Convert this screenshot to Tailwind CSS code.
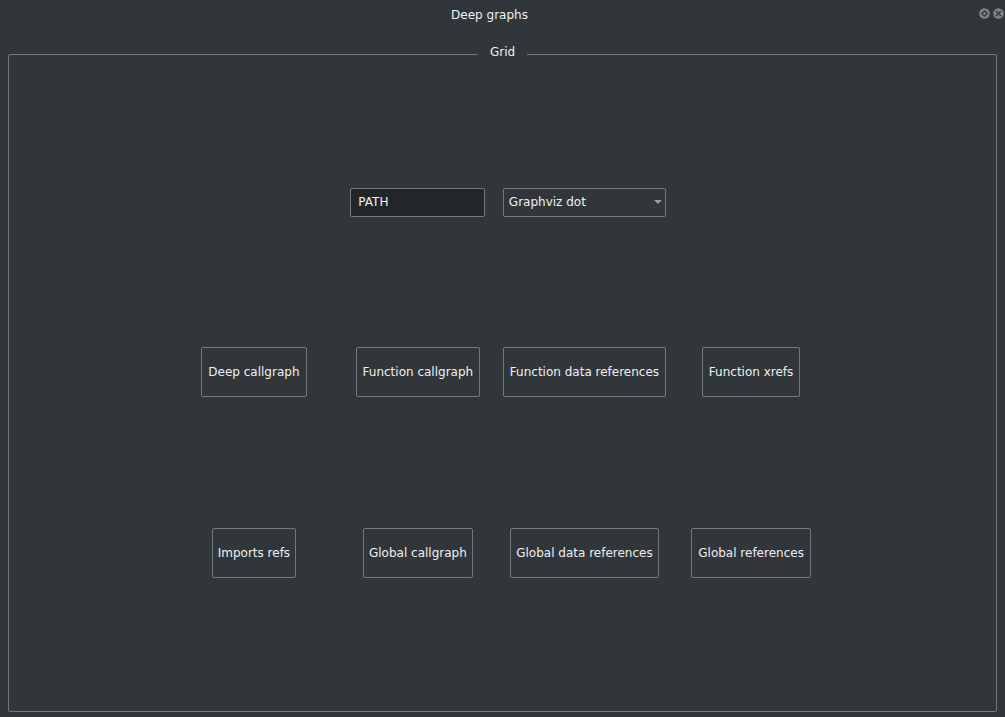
<!DOCTYPE html>
<html lang="en">
<head>
<meta charset="utf-8">
<meta name="viewport" content="width=device-width, initial-scale=1">
<title>Deep graphs</title>
<script src="https://cdn.jsdelivr.net/npm/@tailwindcss/browser@4"></script>
</head>
<body class="flex h-screen flex-col bg-[#31363b] font-['DejaVu_Sans',sans-serif] text-[12px] leading-4 text-[#eff0f1]">
  <header class="flex h-7 items-start pr-px">
    <h1 class="flex-1 pt-[7px] text-center">Deep graphs</h1>
    <div class="flex gap-[3px] pt-2">
      <button type="button" aria-label="Float" class="block">
        <svg class="block size-[11px]" viewBox="0 0 11 11" fill="none"><circle cx="5.5" cy="5.5" r="5.3" fill="#7f8386"/><path d="M5.5 2.8 8.2 5.5 5.5 8.2 2.8 5.5Z" stroke="#31363b" stroke-width="1.3"/></svg>
      </button>
      <button type="button" aria-label="Close" class="block">
        <svg class="block size-[11px]" viewBox="0 0 11 11" fill="none"><circle cx="5.5" cy="5.5" r="5.3" fill="#7f8386"/><path d="M3 3 8 8M8 3 3 8" stroke="#31363b" stroke-width="1.3"/></svg>
      </button>
    </div>
  </header>
  <main class="flex flex-1 flex-col px-2 pt-4 pb-[5px]">
    <fieldset class="flex flex-1 flex-col rounded-xs border border-[#76797c]">
      <legend class="mx-auto px-3 pb-1">Grid</legend>
      <div class="-mt-[7px] grid flex-1 grid-cols-[1fr_1fr_1fr_auto_1fr_1fr] content-evenly items-center justify-items-center gap-x-[6px] px-[2px] pb-[3px]">
        <input type="text" aria-label="Path" value="PATH" class="col-start-3 h-[29px] w-[135px] rounded-xs border border-[#76797c] bg-[#232629] px-[7px] outline-none">
        <div class="relative w-full">
          <select aria-label="Output format" class="block h-[29px] w-full appearance-none rounded-xs border border-[#76797c] bg-[#31363b] px-[5px] outline-none">
            <option>Graphviz dot</option>
          </select>
          <svg class="pointer-events-none absolute top-3 right-1 h-1 w-2" viewBox="0 0 8 4"><path d="M0 0H8L4 4Z" fill="#9a9c9e"/></svg>
        </div>

        <button type="button" class="col-start-2 h-[50px] rounded-xs border border-[#76797c] px-[6px] whitespace-nowrap">Deep callgraph</button>
        <button type="button" class="h-[50px] rounded-xs border border-[#76797c] px-[6px] whitespace-nowrap">Function callgraph</button>
        <button type="button" class="h-[50px] rounded-xs border border-[#76797c] px-[6px] whitespace-nowrap">Function data references</button>
        <button type="button" class="h-[50px] rounded-xs border border-[#76797c] px-[6px] whitespace-nowrap">Function xrefs</button>

        <button type="button" class="col-start-2 h-[50px] rounded-xs border border-[#76797c] px-[5px] whitespace-nowrap">Imports refs</button>
        <button type="button" class="h-[50px] rounded-xs border border-[#76797c] px-[5px] whitespace-nowrap">Global callgraph</button>
        <button type="button" class="h-[50px] rounded-xs border border-[#76797c] px-[5px] whitespace-nowrap">Global data references</button>
        <button type="button" class="h-[50px] rounded-xs border border-[#76797c] px-[6px] whitespace-nowrap">Global references</button>
      </div>
    </fieldset>
  </main>
</body>
</html>
